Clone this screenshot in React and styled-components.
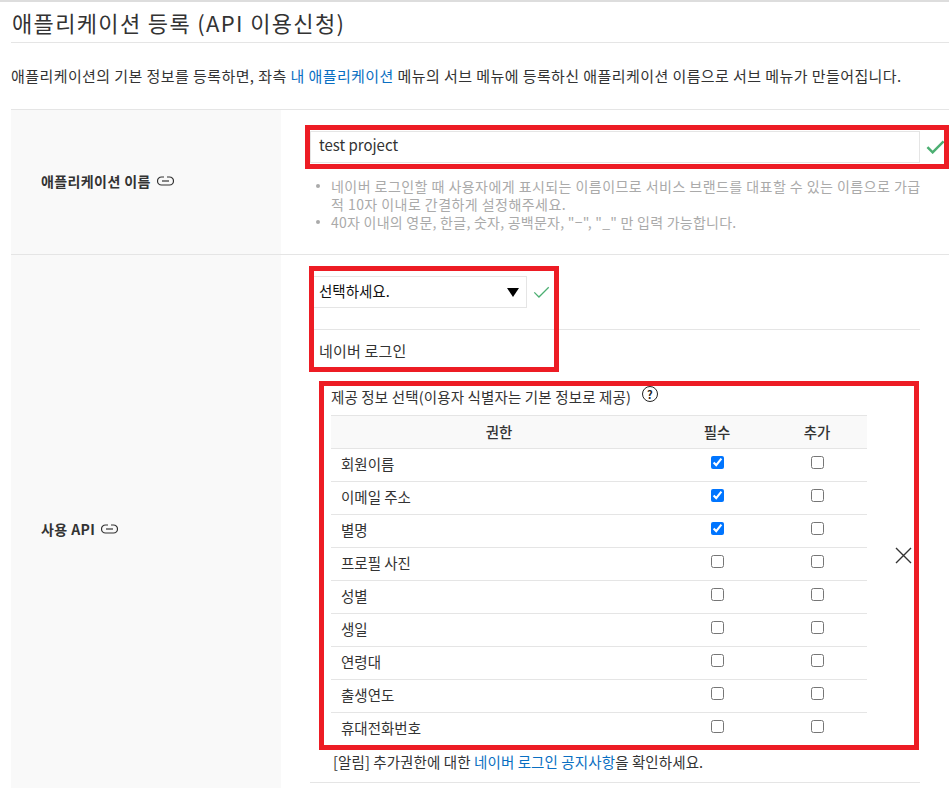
import React from 'react';
import styled, { createGlobalStyle } from 'styled-components';

const GlobalStyle = createGlobalStyle`
    html, body {
        margin: 0;
        padding: 0;
        background: #fff;
    }
    body {
        font-family: "Noto Sans CJK KR", "Noto Sans", sans-serif;
        color: #333;
        overflow: hidden;
    }
`;

const Page = styled.div`
    position: relative;
    width: 949px;
    height: 788px;
    overflow: hidden;
    border-top: 2px solid #ddd;
    box-sizing: border-box;
    padding-left: 11px;
`;

const Title = styled.h2`
    margin: 0;
    height: 40px;
    padding-left: 1px;
    font-size: 22px;
    font-weight: 400;
    letter-spacing: 1.35px;
    line-height: 41px;
    white-space: nowrap;
    color: #333;
    border-bottom: 1px solid #e5e5e5;
`;

const Intro = styled.p`
    margin: 0;
    height: 66px;
    font-size: 15px;
    letter-spacing: 0.42px;
    line-height: 66px;
    white-space: nowrap;
    color: #333;
    border-bottom: 1px solid #e5e5e5;
`;

const Link = styled.a`
    color: #0a6fc2;
    text-decoration: none;
`;

const FormRow = styled.div`
    display: flex;
    height: ${(p) => p.$height}px;
    border-bottom: 1px solid #e5e5e5;
`;

const RowLabel = styled.div`
    flex: none;
    width: 270px;
    box-sizing: border-box;
    padding: 0 0 ${(p) => p.$lift || 0}px 30px;
    display: flex;
    align-items: center;
    gap: 6px;
    background: #f9f9f9;
    font-size: 14px;
    letter-spacing: 0.4px;
    font-weight: 700;
    color: #333;
`;

const RowBody = styled.div`
    flex: none;
    width: 668px;
    box-sizing: border-box;
    padding: ${(p) => p.$top}px 0 0 29px;
`;

const InputLine = styled.div`
    display: flex;
    align-items: center;
    gap: 6px;
`;

const TextBox = styled.div`
    flex: none;
    width: 610px;
    height: 32px;
    box-sizing: border-box;
    border: 1px solid #e5e5e5;
    padding-left: 8px;
    font-size: 15px;
    line-height: 26px;
    color: #333;
`;

const HintList = styled.ul`
    margin: 14px 0 0;
    padding: 0 0 0 21px;
    list-style: none;
    font-size: 14px;
    line-height: 18px;
    color: #aaa;
    width: 590px;
`;

const Hint = styled.li`
    position: relative;
    letter-spacing: ${(p) => p.$spacing}px;
    &::before {
        content: '';
        position: absolute;
        left: -15px;
        top: 7px;
        width: 4px;
        height: 4px;
        border-radius: 50%;
        background: #aaa;
    }
`;

const SelectBox = styled.div`
    flex: none;
    width: 217px;
    height: 32px;
    box-sizing: border-box;
    border: 1px solid #e5e5e5;
    padding: 0 7px 0 8px;
    display: flex;
    align-items: center;
    justify-content: space-between;
    font-size: 14.5px;
    color: #111;
`;

const SelectText = styled.span`
    line-height: 20px;
    margin-top: -2px;
`;

const Arrow = styled.span`
    width: 0;
    height: 0;
    border-left: 6.5px solid transparent;
    border-right: 6.5px solid transparent;
    border-top: 9px solid #000;
`;

const ApiName = styled.div`
    margin-top: 21px;
    height: 43px;
    width: 601px;
    padding-left: 9px;
    border-top: 1px solid #e5e5e5;
    font-size: 15px;
    letter-spacing: 0.2px;
    line-height: 42px;
    color: #333;
`;

const ScopeBlock = styled.div`
    position: relative;
    padding-left: 21px;
    margin-top: 7px;
`;

const ScopeTitle = styled.div`
    display: flex;
    height: 35px;
    font-size: 14.5px;
    letter-spacing: 0.14px;
    line-height: 33px;
    white-space: nowrap;
    color: #333;
`;

const HelpIcon = styled.span`
    margin: 6px 0 0 11px;
    flex: none;
    width: 14px;
    height: 14px;
    border: 1.5px solid #222;
    border-radius: 50%;
    font-size: 11px;
    font-weight: 700;
    line-height: 14px;
    text-align: center;
    color: #222;
`;

const ScopeTable = styled.table`
    width: 536px;
    border-collapse: collapse;
    table-layout: fixed;
    font-size: 14.5px;
    line-height: 20px;
    color: #333;
`;

const HeadCell = styled.th`
    box-sizing: border-box;
    height: 33px;
    padding: 0;
    font-weight: 500;
    font-size: 14.5px;
    background: #f9f9f9;
    border-top: 1px solid #e5e5e5;
    border-bottom: 1px solid #e5e5e5;
    width: ${(p) => p.$width || 'auto'};
`;

const NameCell = styled.td`
    box-sizing: border-box;
    height: 33px;
    padding: 0 0 2px 10px;
    border-bottom: 1px solid #e5e5e5;
    ${(p) => p.$last && 'border-bottom: 0;'}
`;

const CheckCell = styled.td`
    box-sizing: border-box;
    height: 33px;
    padding: 0 0 9px;
    text-align: center;
    border-bottom: 1px solid #e5e5e5;
    ${(p) => p.$last && 'border-bottom: 0;'}
`;

const Check = styled.input.attrs({ type: 'checkbox' })`
    margin: 0;
    width: 13px;
    height: 13px;
    vertical-align: middle;
`;

const RemoveIcon = styled.svg`
    position: absolute;
    left: 585px;
    top: 167px;
`;

const Notice = styled.div`
    margin-top: 5px;
    height: 31px;
    width: 587px;
    margin-left: -21px;
    padding-left: 23px;
    border-bottom: 1px solid #e5e5e5;
    font-size: 14.5px;
    letter-spacing: 0.1px;
    line-height: 22px;
    white-space: nowrap;
    color: #333;
`;

const RedBox = styled.div`
    position: absolute;
    box-sizing: border-box;
    border: 5px solid #ed1c24;
    left: ${(p) => p.$l}px;
    top: ${(p) => p.$t}px;
    width: ${(p) => p.$w}px;
    height: ${(p) => p.$h}px;
    pointer-events: none;
`;

const LinkIcon = () => (
    <svg width="17" height="10" viewBox="0 0 17 10" fill="none" stroke="#333" strokeWidth="1.2">
        <path d="M7 1H4.5a3.7 3.7 0 0 0 0 8H12.5a3.7 3.7 0 0 0 0-8H10" />
        <path d="M5 5h7" />
    </svg>
);

const CheckMark = ({ size = 20, width = 2 }) => (
    <svg width={size} height={size * 0.75} viewBox="0 0 20 15" fill="none" stroke="#4caf72" strokeWidth={width}>
        <path d="M1.5 7.5l5.5 5.5L18.5 1.5" />
    </svg>
);

const scopes = [
    { name: '회원이름', required: true },
    { name: '이메일 주소', required: true },
    { name: '별명', required: true },
    { name: '프로필 사진' },
    { name: '성별' },
    { name: '생일' },
    { name: '연령대' },
    { name: '출생연도' },
    { name: '휴대전화번호' },
];

const App = () => (
    <>
        <GlobalStyle />
        <Page>
            <Title>애플리케이션 등록 (API 이용신청)</Title>
            <Intro>
                애플리케이션의 기본 정보를 등록하면, 좌측 <Link>내 애플리케이션</Link> 메뉴의 서브 메뉴에 등록하신 애플리케이션 이름으로 서브 메뉴가 만들어집니다.
            </Intro>
            <FormRow $height={144}>
                <RowLabel $lift={3}>
                    애플리케이션 이름 <LinkIcon />
                </RowLabel>
                <RowBody $top={21}>
                    <InputLine>
                        <TextBox>test project</TextBox>
                        <CheckMark size={19} width={2.6} />
                    </InputLine>
                    <HintList>
                        <Hint $spacing={0.45}>네이버 로그인할 때 사용자에게 표시되는 이름이므로 서비스 브랜드를 대표할 수 있는 이름으로 가급적 10자 이내로 간결하게 설정해주세요.</Hint>
                        <Hint $spacing={0.25}>40자 이내의 영문, 한글, 숫자, 공백문자, "−", "_" 만 입력 가능합니다.</Hint>
                    </HintList>
                </RowBody>
            </FormRow>
            <FormRow $height={548}>
                <RowLabel>
                    사용 API <LinkIcon />
                </RowLabel>
                <RowBody $top={21}>
                    <InputLine>
                        <SelectBox>
                            <SelectText>선택하세요.</SelectText>
                            <Arrow />
                        </SelectBox>
                        <CheckMark size={17} width={1.5} />
                    </InputLine>
                    <ApiName>네이버 로그인</ApiName>
                    <ScopeBlock>
                        <ScopeTitle>
                            제공 정보 선택(이용자 식별자는 기본 정보로 제공)
                            <HelpIcon>?</HelpIcon>
                        </ScopeTitle>
                        <ScopeTable>
                            <thead>
                                <tr>
                                    <HeadCell>권한</HeadCell>
                                    <HeadCell $width="100px">필수</HeadCell>
                                    <HeadCell $width="100px">추가</HeadCell>
                                </tr>
                            </thead>
                            <tbody>
                                {scopes.map((s, i) => {
                                    const last = i === scopes.length - 1;
                                    return (
                                        <tr key={s.name}>
                                            <NameCell $last={last}>{s.name}</NameCell>
                                            <CheckCell $last={last}>
                                                <Check defaultChecked={!!s.required} />
                                            </CheckCell>
                                            <CheckCell $last={last}>
                                                <Check />
                                            </CheckCell>
                                        </tr>
                                    );
                                })}
                            </tbody>
                        </ScopeTable>
                        <RemoveIcon width="17" height="17" viewBox="0 0 17 17" fill="none" stroke="#333" strokeWidth="1.4">
                            <path d="M1 1l15 15M16 1L1 16" />
                        </RemoveIcon>
                        <Notice>
                            [알림] 추가권한에 대한 <Link>네이버 로그인 공지사항</Link>을 확인하세요.
                        </Notice>
                    </ScopeBlock>
                </RowBody>
            </FormRow>
            <RedBox $l={305} $t={123} $w={644} $h={44} />
            <RedBox $l={309} $t={264} $w={250} $h={106} />
            <RedBox $l={319} $t={379} $w={600} $h={369} />
        </Page>
    </>
);

export default App;
